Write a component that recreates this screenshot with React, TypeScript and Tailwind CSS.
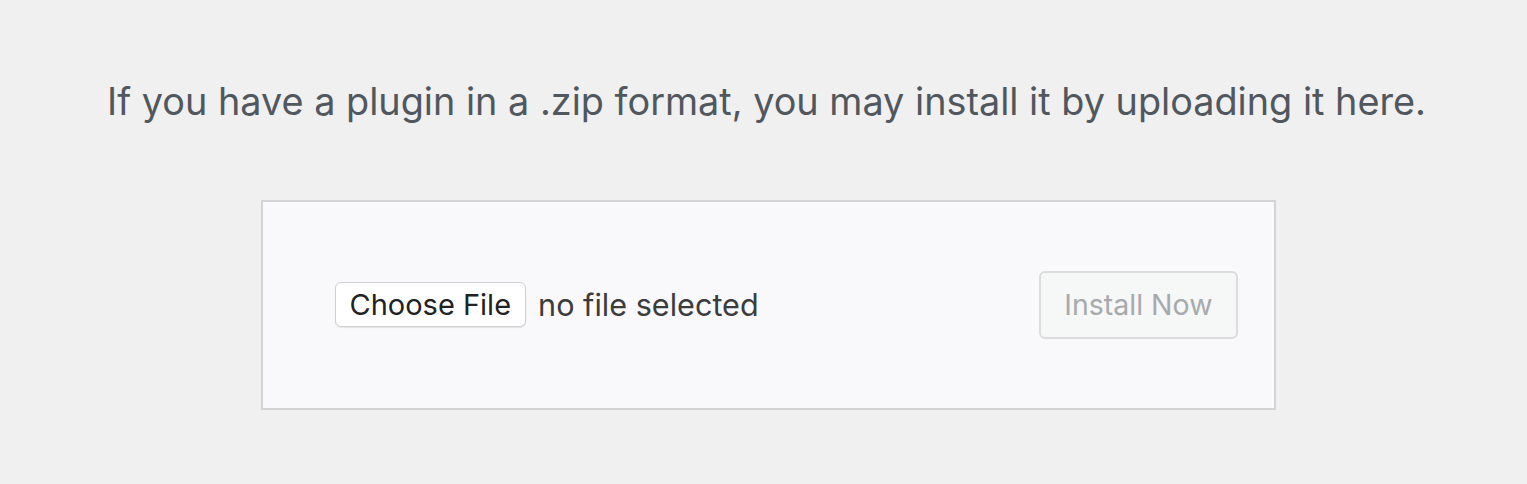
export default function App() {
  return (
    <div className="min-h-[484px] w-full bg-[#f0f0f1] pt-[77px] font-['Inter',sans-serif]">
      <p className="pl-[6px] text-center text-[37.8px] leading-[48px] text-[#50575e]">
        If you have a plugin in a .zip format, you may install it by uploading it here.
      </p>
      <div className="ml-[calc(50%-503px)] mt-[75px] flex h-[210px] w-[1015px] items-center justify-between border-2 border-[#d3d3d5] bg-[#f9f9fb] pl-[72px] pr-[36px]">
        <div className="flex items-center gap-[12px]">
          <button className="h-[45px] rounded-[6px] border border-[#cfcfd1] bg-white px-[14px] text-[29px] text-[#222] shadow-[0_1px_1px_rgba(0,0,0,0.08)]">
            Choose File
          </button>
          <span className="text-[30.6px] text-[#3c3c3c]">no file selected</span>
        </div>
        <button
          disabled
          className="h-[68px] rounded-[6px] border-2 border-[#dcdcde] bg-[#f6f7f7] px-[23px] text-[28.5px] text-[#a7aaad]"
        >
          Install Now
        </button>
      </div>
    </div>
  )
}
